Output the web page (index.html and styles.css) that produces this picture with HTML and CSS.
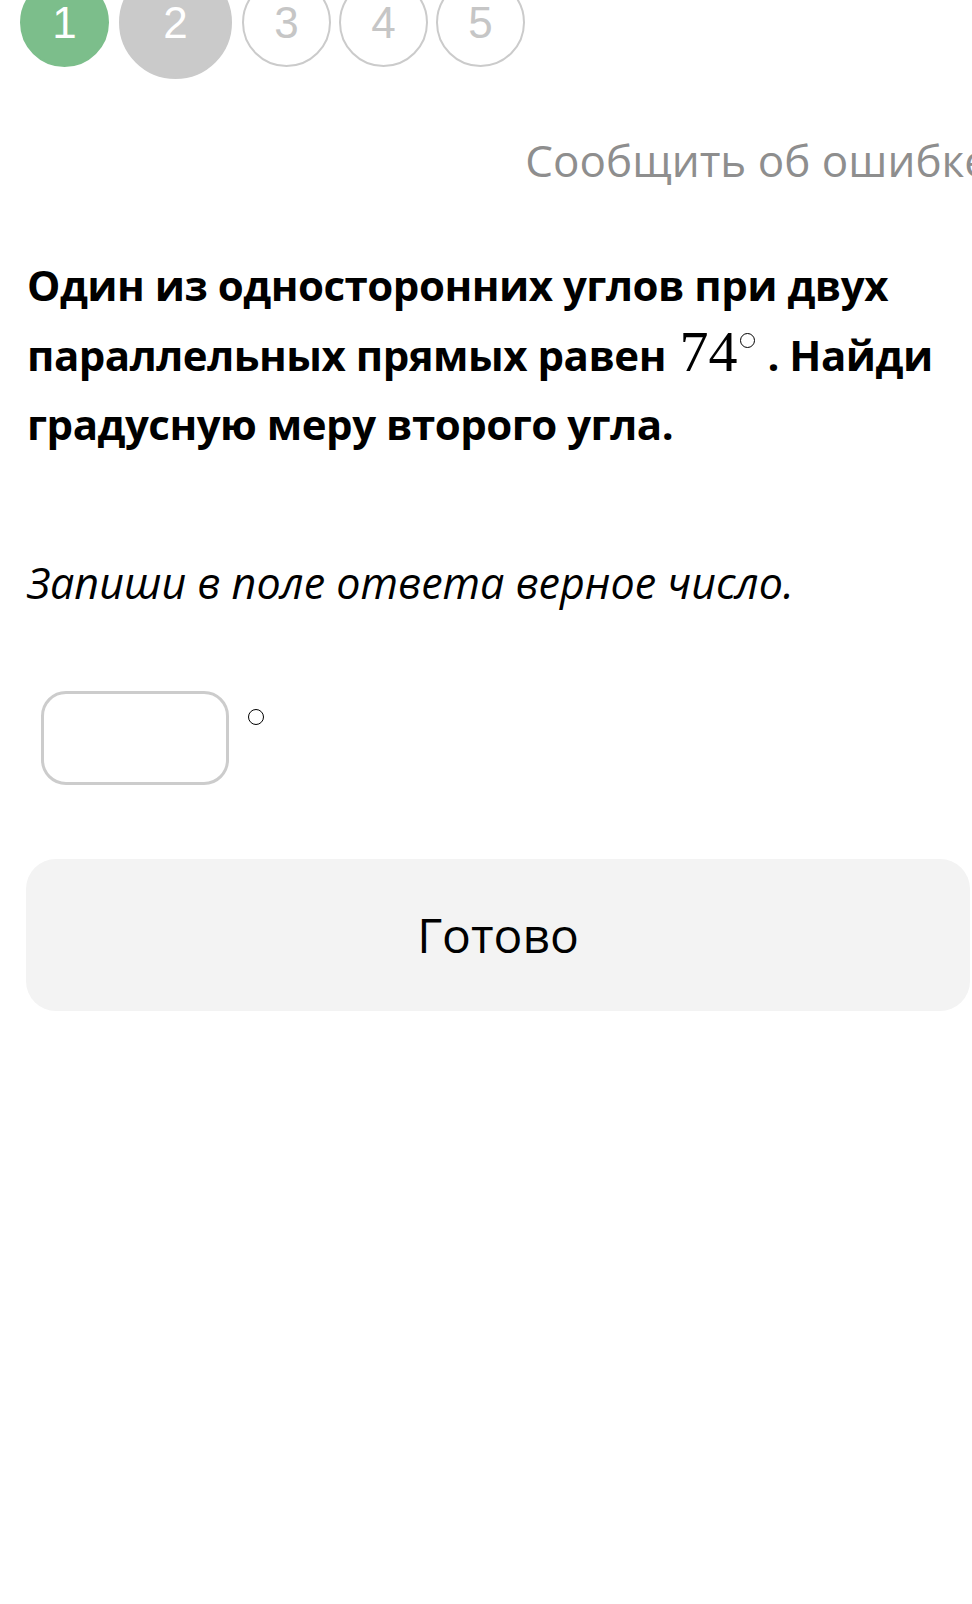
FILE: index.html
```html
<!DOCTYPE html>
<html lang="ru">
<head>
  <meta charset="UTF-8" />
  <meta name="viewport" content="width=device-width, initial-scale=1.0" />
  <title>Задание 2</title>
  <link rel="stylesheet" href="styles.css">
</head>
<body>

  <!-- Task progress -->
  <nav class="steps">
    <span class="step step-done">1</span>
    <span class="step step-current">2</span>
    <span class="step">3</span>
    <span class="step">4</span>
    <span class="step">5</span>
  </nav>

  <main class="task">
    <div class="report-row">
      <a class="report" href="#">Сообщить об ошибке</a>
    </div>

    <p class="question">
      Один из односторонних углов при двух параллельных прямых равен
      <span class="math">74<span class="deg deg-math"></span></span>. Найди градусную меру второго угла.
    </p>

    <p class="hint">Запиши в поле ответа верное число.</p>

    <div class="answer">
      <input class="answer-input" type="text" aria-label="Ответ" />
      <span class="deg deg-answer"></span>
    </div>

    <button class="done">Готово</button>
  </main>

</body>
</html>
```

FILE: styles.css
```css
html, body {
  overflow-x: hidden;
}

body {
  margin: 0;
  background: #fff;
  color: #000;
  font-family: 'Open Sans', 'Noto Sans', sans-serif;
}

/* Progress circles */
.steps {
  display: flex;
  align-items: center;
  gap: 8px;
  height: 113px;
  margin: -34px 0 0 20px;
}

.step {
  box-sizing: border-box;
  width: 89px;
  height: 89px;
  border: 2px solid #cbcbcb;
  border-radius: 50%;
  display: flex;
  justify-content: center;
  align-items: center;
  font-family: 'Liberation Sans', Arial, sans-serif;
  font-size: 44px;
  color: #c6c6c6;
}

.step-done {
  background: #7cbe8b;
  border-color: #7cbe8b;
  color: #fff;
}

.step-current {
  width: 113px;
  height: 113px;
  margin: 0 2px;
  background: #cacaca;
  border-color: #cacaca;
  color: #fff;
}

/* Task body */
.task {
  width: 944px;
  padding-left: 26px;
}

.report-row {
  margin: 51px -19px 0 0;
  text-align: right;
}

.report {
  font-size: 44px;
  line-height: 60px;
  color: #8e8e8e;
  text-decoration: none;
  white-space: nowrap;
}

.question {
  margin: 60px 0 0 1px;
  font-size: 42px;
  font-weight: bold;
  letter-spacing: -0.5px;
  line-height: 69.5px;
}

.math {
  margin-left: 3px;
  font-family: 'Liberation Serif', 'Times New Roman', serif;
  font-weight: normal;
  font-size: 58px;
  letter-spacing: 0;
  line-height: 1;
}

.deg {
  display: inline-block;
  box-sizing: border-box;
  border: 1.5px solid #000;
  border-radius: 50%;
}

.deg-math {
  width: 15px;
  height: 15px;
  margin: 0 12px 0 3px;
  vertical-align: 23px;
}

.hint {
  margin: 94px 0 0 1px;
  font-size: 43px;
  font-style: italic;
  line-height: 60px;
}

.answer {
  display: flex;
  align-items: flex-start;
  margin: 78px 0 0 15px;
}

.answer-input {
  box-sizing: border-box;
  width: 188px;
  height: 94px;
  border: 3px solid #cccccc;
  border-radius: 25px;
  background: #fff;
  font: inherit;
  font-size: 40px;
  padding: 0 16px;
  outline: none;
}

.deg-answer {
  width: 16px;
  height: 16px;
  margin: 18px 0 0 19px;
}

.done {
  display: block;
  width: 944px;
  height: 152px;
  margin-top: 74px;
  border: none;
  border-radius: 30px;
  background: #f3f3f3;
  color: #000;
  font-family: 'Open Sans', 'Noto Sans', sans-serif;
  font-size: 48px;
  cursor: pointer;
}
```
